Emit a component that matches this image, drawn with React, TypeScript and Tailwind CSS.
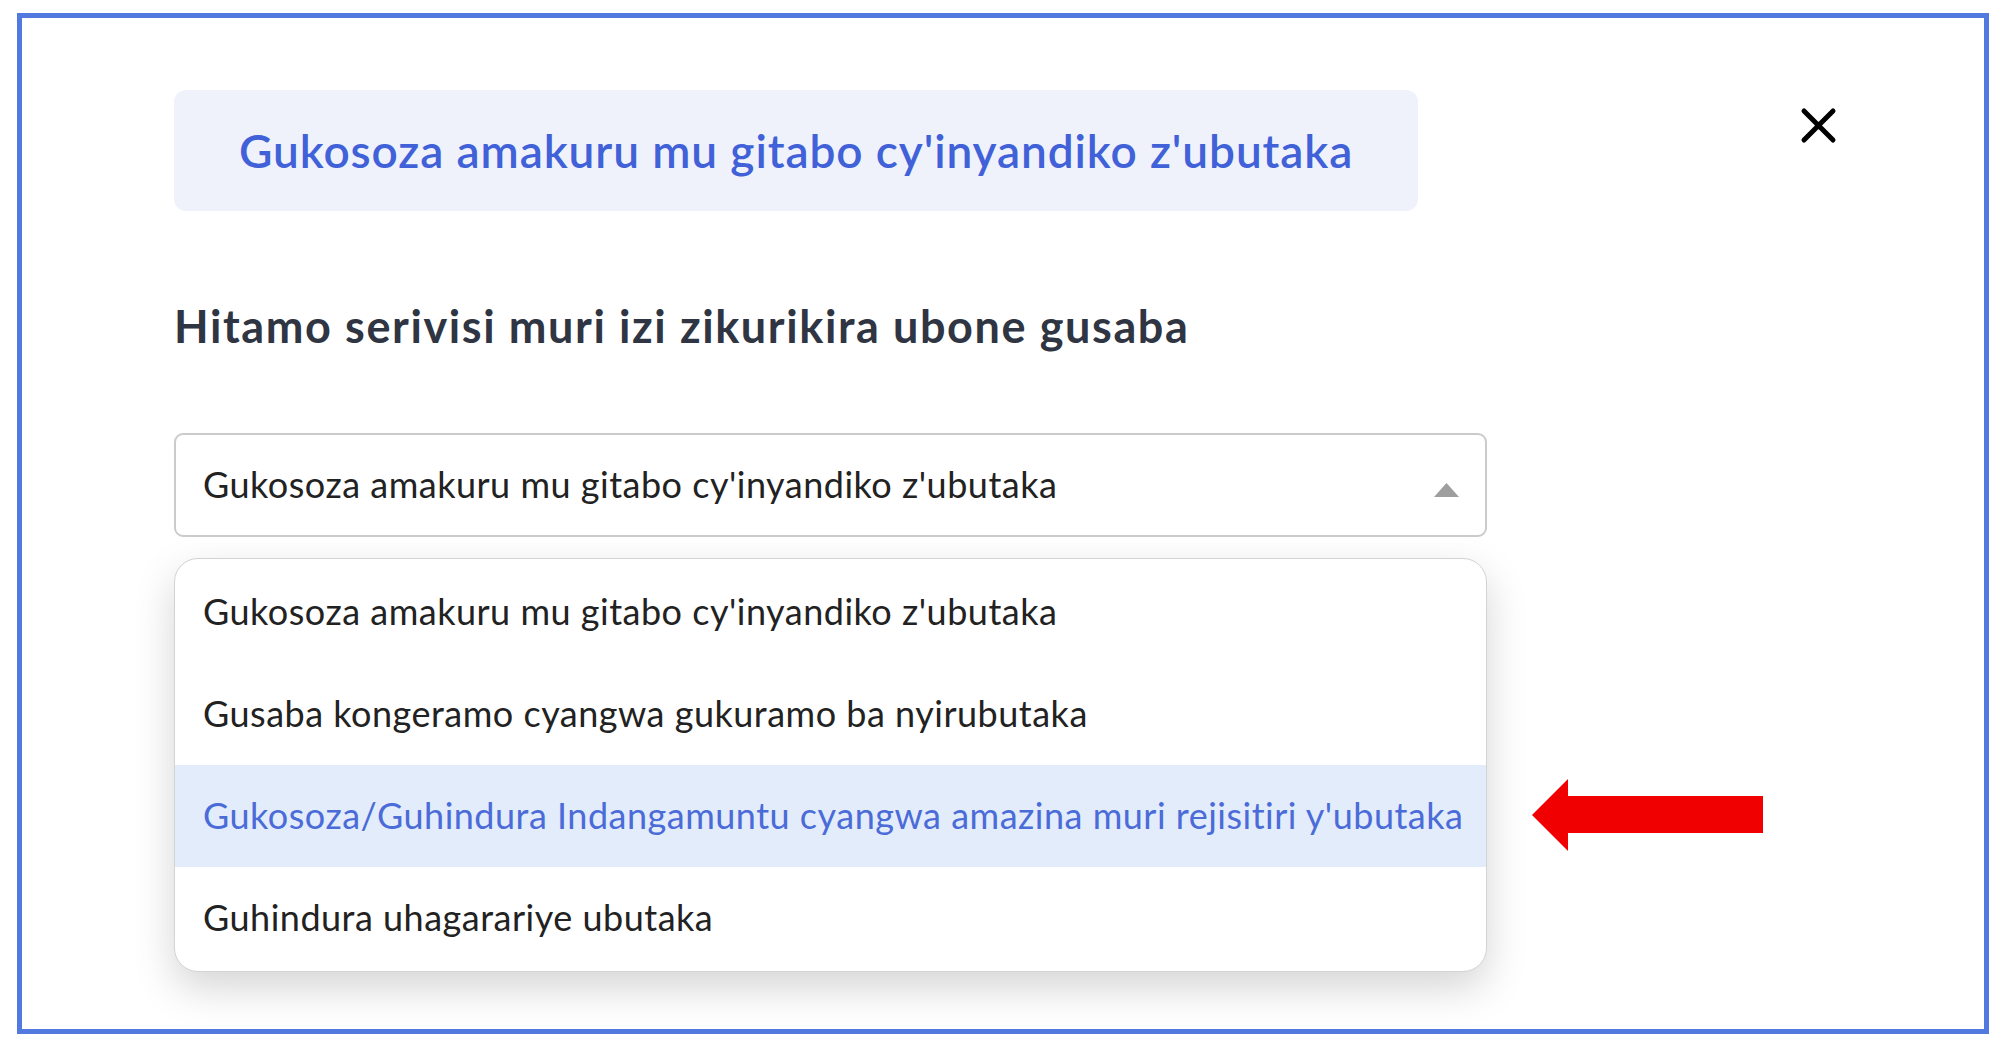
import React from 'react'

const OPTIONS = [
  "Gukosoza amakuru mu gitabo cy'inyandiko z'ubutaka",
  'Gusaba kongeramo cyangwa gukuramo ba nyirubutaka',
  "Gukosoza/Guhindura Indangamuntu cyangwa amazina muri rejisitiri y'ubutaka",
  'Guhindura uhagarariye ubutaka',
]

const font = "font-['Lato','Open_Sans',sans-serif]"

export default function App() {
  const active = 2
  return (
    <div className={`w-full h-[1044px] bg-white pt-[13px] pl-[17px] pr-[12px] pb-[10px] ${font}`}>
      <div className="h-full border-[5px] border-[#5279e0] pt-[72px] pl-[152px] pr-[147px]">
        {/* header */}
        <div className="flex items-start justify-between">
          <div className="h-[121px] flex items-center px-[65px] rounded-[12px] bg-[#eff2fb]">
            <span className="text-[46px] leading-[1.2] font-semibold tracking-[0.9px] text-[#4061d8]">
              Gukosoza amakuru mu gitabo cy'inyandiko z'ubutaka
            </span>
          </div>
          <button className="mt-[17px] w-[37px] h-[37px]">
            <svg width="37" height="37" viewBox="0 0 37 37">
              <path d="M4 4 L33 33 M33 4 L4 33" stroke="#000" strokeWidth="5" strokeLinecap="round" />
            </svg>
          </button>
        </div>

        <h2 className="mt-[88px] text-[45px] leading-[1.2] font-bold tracking-[1.6px] text-[#2f3542]">
          Hitamo serivisi muri izi zikurikira ubone gusaba
        </h2>

        <div className="relative mt-[80px] w-[1313px]">
          {/* select */}
          <div className="h-[104px] flex items-center justify-between border-2 border-[#cbcbcb] rounded-[9px] pl-[27px] pr-[26px]">
            <span className="text-[36px] leading-[1.2] tracking-[0.5px] text-[#222]">{OPTIONS[0]}</span>
            <svg width="25" height="14" viewBox="0 0 25 14" className="mt-[10px]">
              <polygon points="12.5,0 25,14 0,14" fill="#9e9e9e" />
            </svg>
          </div>

          {/* dropdown list */}
          <div className="mt-[21px] border-[1.5px] border-[#d3d3d3] rounded-[24px] bg-white py-[2px] overflow-hidden shadow-[0_16px_40px_rgba(0,0,0,0.17)]">
            {OPTIONS.map((o, i) => (
              <div
                key={o}
                className={
                  i === active
                    ? 'h-[102px] flex items-center pl-[28px] bg-[#e3ecfb] text-[#4a6bd8]'
                    : 'h-[102px] flex items-center pl-[28px] text-[#222]'
                }
              >
                <span className="text-[36px] leading-[1.2] tracking-[0.5px]">{o}</span>
              </div>
            ))}
          </div>

          {/* annotation arrow */}
          <svg
            width="232"
            height="73"
            viewBox="0 0 232 73"
            className="absolute left-[1358px] top-[346px]"
          >
            <polygon points="0,36 36,0 36,17 231,17 231,54 36,54 36,72" fill="#f00000" />
          </svg>
        </div>
      </div>
    </div>
  )
}
